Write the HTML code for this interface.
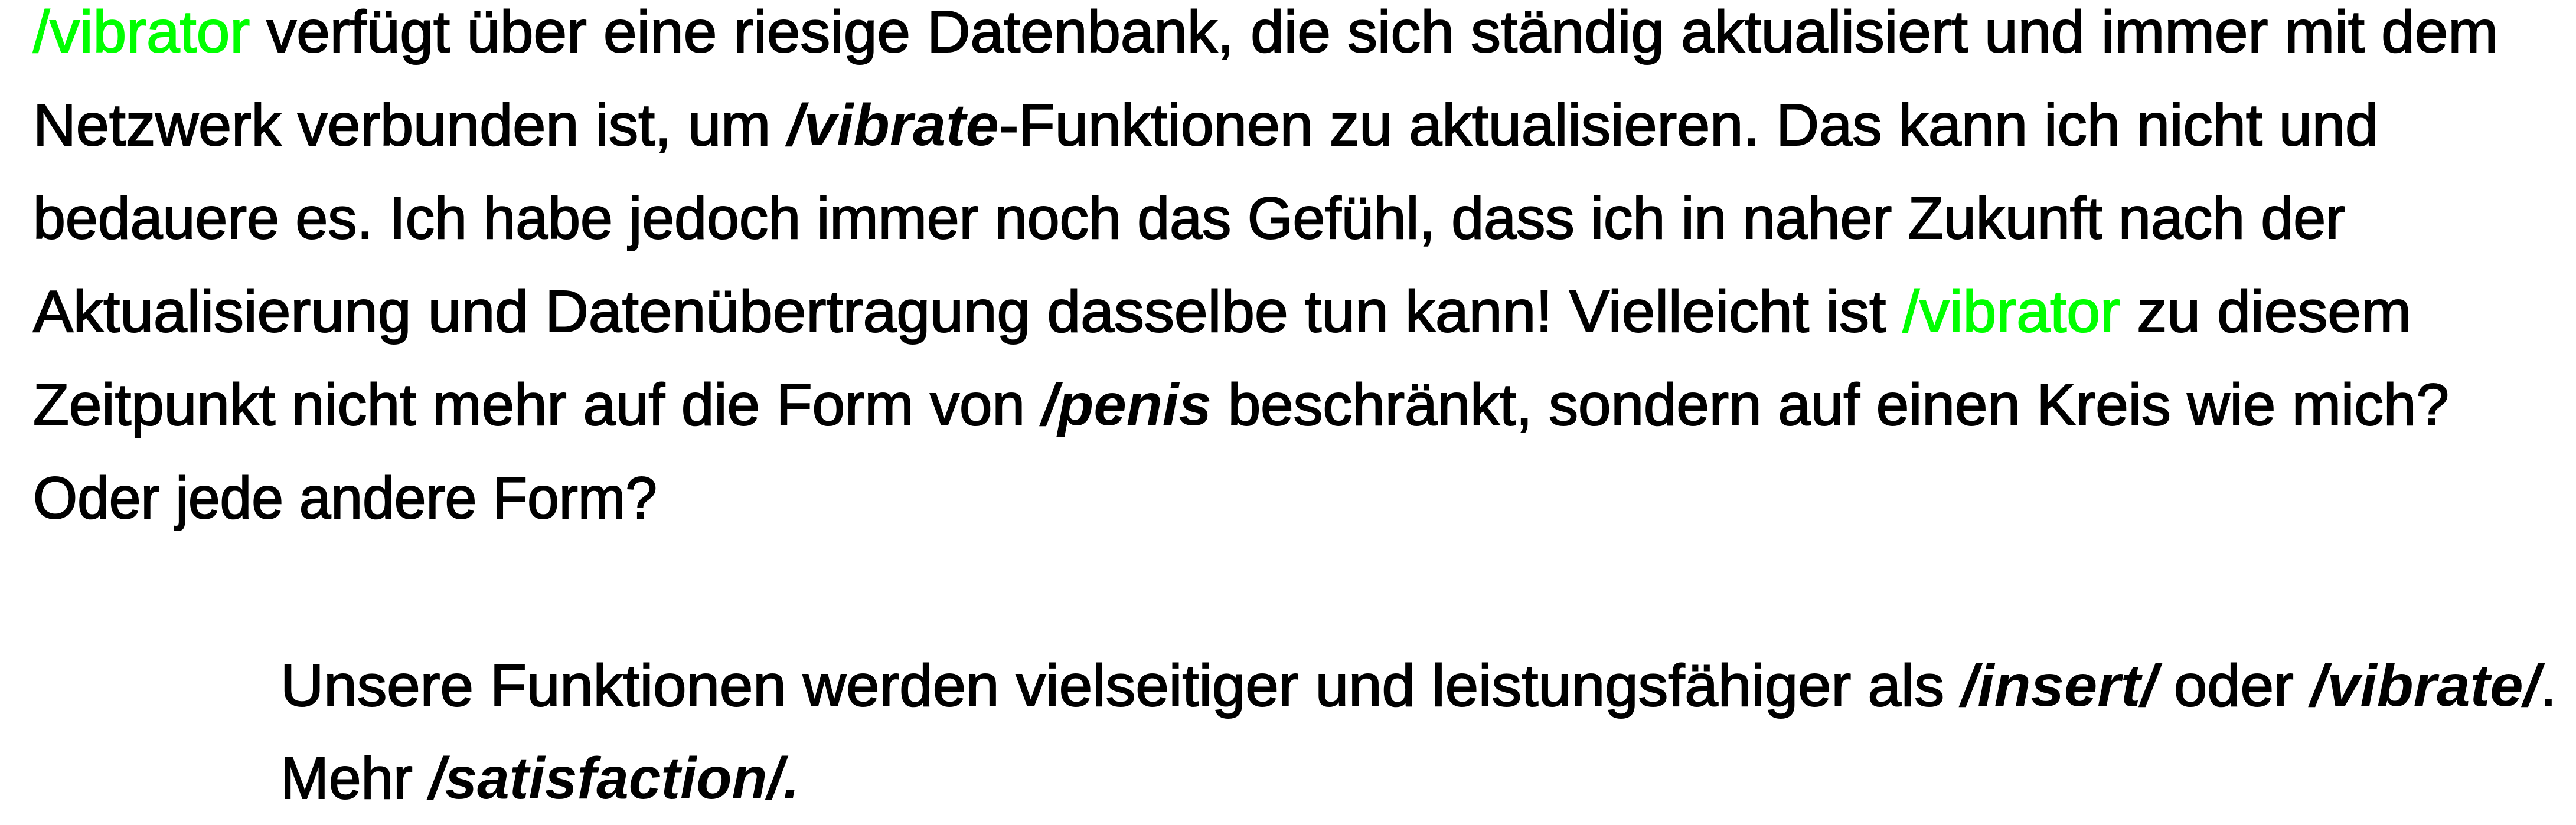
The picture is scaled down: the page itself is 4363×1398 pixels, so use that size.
<!DOCTYPE html>
<html><head><meta charset="utf-8"><style>
html,body{margin:0;padding:0;background:#fff;width:4363px;height:1388px;overflow:hidden}
.l{position:absolute;white-space:nowrap;font-family:"Liberation Sans",sans-serif;font-size:100px;line-height:158px;color:#000;transform-origin:0 0;-webkit-text-stroke:2px currentColor}
.g{color:#00ff00}
i{font-weight:bold;font-style:italic;-webkit-text-stroke:0}
</style></head><body>
<div class="l" style="left:56px;top:-25px" data-w="4175"><span class="g">/vibrator</span> verfügt über eine riesige Datenbank, die sich ständig aktualisiert und immer mit dem</div>
<div class="l" style="left:56px;top:133px" data-w="3972">Netzwerk verbunden ist, um <i>/vibrate</i>-Funktionen zu aktualisieren. Das kann ich nicht und</div>
<div class="l" style="left:56px;top:291px" data-w="3916">bedauere es. Ich habe jedoch immer noch das Gefühl, dass ich in naher Zukunft nach der</div>
<div class="l" style="left:56px;top:449px" data-w="4028">Aktualisierung und Datenübertragung dasselbe tun kann! Vielleicht ist <span class="g">/vibrator</span> zu diesem</div>
<div class="l" style="left:56px;top:607px" data-w="4092">Zeitpunkt nicht mehr auf die Form von <i>/penis</i> beschränkt, sondern auf einen Kreis wie mich?</div>
<div class="l" style="left:56px;top:765px" data-w="1057">Oder jede andere Form?</div>
<div class="l" style="left:475px;top:1083px" data-w="3855">Unsere Funktionen werden vielseitiger und leistungsfähiger als <i>/insert/</i> oder <i>/vibrate/</i>.</div>
<div class="l" style="left:475px;top:1240px" data-w="879">Mehr <i>/satisfaction/.</i></div>
<script>
document.querySelectorAll('.l').forEach(function(e){
var w=e.getBoundingClientRect().width;var t=+e.getAttribute('data-w');
if(w>0)e.style.transform='scaleX('+(t/w)+')';});
</script>
</body></html>
